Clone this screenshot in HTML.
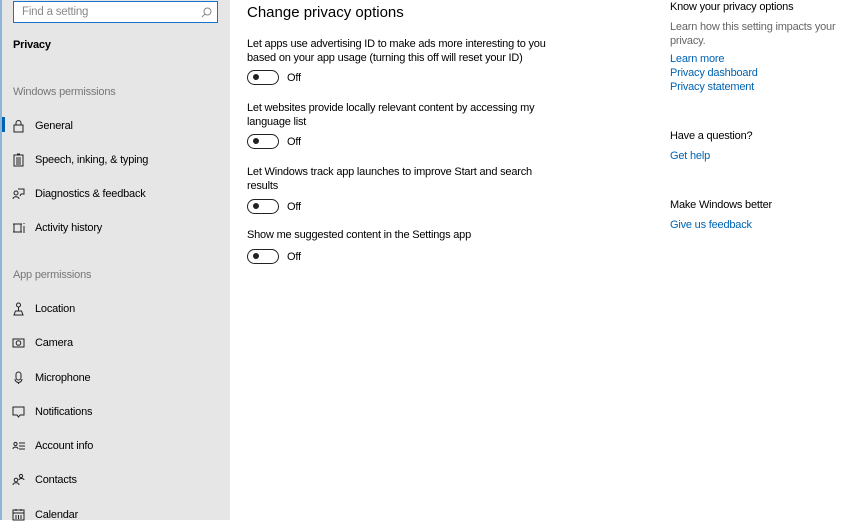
<!DOCTYPE html>
<html><head><style>
*{margin:0;padding:0;box-sizing:border-box}
body{width:860px;height:520px;overflow:hidden;background:#fff;font-family:"Liberation Sans",sans-serif;font-size:11px;letter-spacing:-0.2px;color:#000;position:relative}
.side{position:absolute;left:0;top:0;width:230px;height:520px;background:#e6e6e6}
.edge{position:absolute;left:0;top:0;width:2px;height:520px;background:#8fb3d9}
.search{position:absolute;left:13px;top:1px;width:205px;height:22px;border:1px solid #1a73c9;background:#fff;color:#888;padding:4px 8px;font-size:11.5px}
.search svg{position:absolute;right:5px;top:5px}
.t{position:absolute;white-space:nowrap}
.hdr{color:#777;font-size:11px}
.item{position:absolute;left:0;width:230px;height:20px}
.item svg{position:absolute;left:12px;top:3px}
.item span{position:absolute;left:35px;top:4px;white-space:nowrap}
.sel{position:absolute;left:2px;top:117px;width:3px;height:15px;background:#0063b1}
.tog{position:absolute;left:247px;width:32px;height:15px;border:1.6px solid #222;border-radius:8px}
.tog::after{content:"";position:absolute;left:4.5px;top:3px;width:6px;height:6px;border-radius:50%;background:#222}
a{color:#0063b1;text-decoration:none}
</style></head><body>
<div class="side"></div><div class="edge"></div>
<div class="search">Find a setting<svg width="11" height="11" viewBox="0 0 11 11"><circle cx="6.5" cy="4.5" r="3.5" fill="none" stroke="#888"/><path d="M4 7L1 10" stroke="#888"/></svg></div>
<div class="t" style="left:13px;top:39px;font-weight:bold">Privacy</div>
<div class="t hdr" style="left:13px;top:86px">Windows permissions</div>
<div class="sel"></div>
<div class="item" style="top:116px"><svg width="13" height="14" viewBox="0 0 13 14" fill="none" stroke="#222"><rect x="2" y="6" width="9" height="7"/><path d="M4 6V4a2.5 2.5 0 015 0v2"/></svg><span>General</span></div>
<div class="item" style="top:150px"><svg width="13" height="14" viewBox="0 0 13 14" fill="none" stroke="#222"><rect x="2" y="2" width="9" height="11"/><path d="M5 1h3M4 5h5M4 7h5M4 9h5M4 11h5"/></svg><span>Speech, inking, &amp; typing</span></div>
<div class="item" style="top:184px"><svg width="13" height="14" viewBox="0 0 13 14" fill="none" stroke="#222"><circle cx="4" cy="6" r="2"/><path d="M1 12c0-3 6-3 6 0M6 2h6v5h-3l-1 2"/></svg><span>Diagnostics &amp; feedback</span></div>
<div class="item" style="top:218px"><svg width="14" height="14" viewBox="0 0 14 14" fill="none" stroke="#222"><rect x="2" y="3" width="7" height="8"/><path d="M1 3h9M1 11h9M12 2v1M12 5v7"/></svg><span>Activity history</span></div>
<div class="t hdr" style="left:13px;top:269px">App permissions</div>
<div class="item" style="top:299px"><svg width="13" height="14" viewBox="0 0 13 14" fill="none" stroke="#222"><circle cx="6.5" cy="3" r="2"/><path d="M6.5 5v4M2 13l1.5-4h6L11 13z"/></svg><span>Location</span></div>
<div class="item" style="top:333px"><svg width="13" height="14" viewBox="0 0 13 14" fill="none" stroke="#222"><rect x="1" y="3" width="11" height="8"/><circle cx="6.5" cy="7" r="2.3"/></svg><span>Camera</span></div>
<div class="item" style="top:368px"><svg width="13" height="14" viewBox="0 0 13 14" fill="none" stroke="#222"><rect x="4" y="1" width="5" height="8" rx="2.5"/><path d="M3 8a3.5 3.5 0 007 0M6.5 11v2"/></svg><span>Microphone</span></div>
<div class="item" style="top:402px"><svg width="13" height="14" viewBox="0 0 13 14" fill="none" stroke="#222"><path d="M1 2h11v8H8l-1.5 2L5 10H1z"/></svg><span>Notifications</span></div>
<div class="item" style="top:436px"><svg width="14" height="14" viewBox="0 0 14 14" fill="none" stroke="#222"><circle cx="3.5" cy="5" r="1.6"/><path d="M1 10c0-2.5 5-2.5 5 0M7 4h6M7 7h6M7 10h6"/></svg><span>Account info</span></div>
<div class="item" style="top:470px"><svg width="13" height="14" viewBox="0 0 13 14" fill="none" stroke="#222"><circle cx="4" cy="7" r="1.8"/><path d="M1 12c0-3 6-3 6 0"/><circle cx="9" cy="3" r="1.6"/><path d="M7 7c0-2 5-2 5 0"/></svg><span>Contacts</span></div>
<div class="item" style="top:505px"><svg width="13" height="14" viewBox="0 0 13 14" fill="none" stroke="#222"><rect x="1" y="2" width="11" height="10"/><path d="M1 5h11M4 1v2M9 1v2M4 7v4M6.5 7v4M9 7v4"/></svg><span>Calendar</span></div>

<div class="t" style="left:247px;top:4px;font-size:15px;letter-spacing:0">Change privacy options</div>
<div class="t" style="left:247px;top:37px;line-height:14px">Let apps use advertising ID to make ads more interesting to you<br>based on your app usage (turning this off will reset your ID)</div>
<div class="tog" style="top:70px"></div><div class="t" style="left:287px;top:72px">Off</div>
<div class="t" style="left:247px;top:101px;line-height:14px">Let websites provide locally relevant content by accessing my<br>language list</div>
<div class="tog" style="top:134px"></div><div class="t" style="left:287px;top:136px">Off</div>
<div class="t" style="left:247px;top:165px;line-height:14px">Let Windows track app launches to improve Start and search<br>results</div>
<div class="tog" style="top:199px"></div><div class="t" style="left:287px;top:201px">Off</div>
<div class="t" style="left:247px;top:229px">Show me suggested content in the Settings app</div>
<div class="tog" style="top:249px"></div><div class="t" style="left:287px;top:251px">Off</div>

<div class="t" style="left:670px;top:1px">Know your privacy options</div>
<div class="t" style="left:670px;top:20px;line-height:14px;color:#666">Learn how this setting impacts your<br>privacy.</div>
<div class="t" style="left:670px;top:53px"><a>Learn more</a></div>
<div class="t" style="left:670px;top:67px"><a>Privacy dashboard</a></div>
<div class="t" style="left:670px;top:81px"><a>Privacy statement</a></div>
<div class="t" style="left:670px;top:130px">Have a question?</div>
<div class="t" style="left:670px;top:150px"><a>Get help</a></div>
<div class="t" style="left:670px;top:199px">Make Windows better</div>
<div class="t" style="left:670px;top:219px"><a>Give us feedback</a></div>
</body></html>
